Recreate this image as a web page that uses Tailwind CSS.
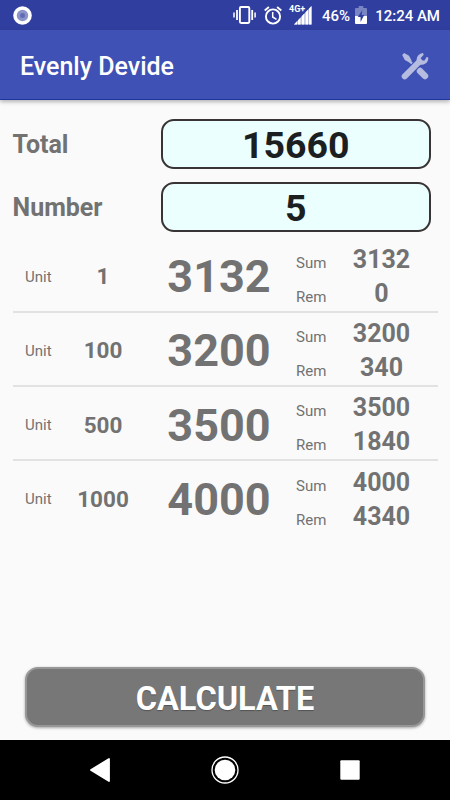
<!DOCTYPE html>
<html lang="en">
<head>
<meta charset="utf-8">
<title>Evenly Devide</title>
<script src="https://cdn.jsdelivr.net/npm/@tailwindcss/browser@4"></script>
</head>
<body class="w-[450px] h-[800px] overflow-hidden bg-[#fafafa] font-[Roboto,sans-serif] text-[#727272] flex flex-col">
<div class="h-[30px] shrink-0 bg-[#303f9f] flex items-center text-white pl-[13px] pr-[10px] font-medium text-[15px]">
  <svg class="w-[19px] h-[19px]" viewBox="0 0 19 19"><circle cx="9.5" cy="9.5" r="9.3" fill="#fff"/><circle cx="9.5" cy="9.5" r="5.7" fill="#8b93c9"/><circle cx="9.5" cy="9.5" r="2.5" fill="#606bb6"/></svg>
  <svg class="w-[23px] h-[18px] ml-[201px]" viewBox="0 0 23 18" fill="none" stroke="#fff" stroke-width="1.9"><rect x="6.9" y="1" width="9.4" height="16" rx="1.2" /><path d="M4 4v10M19.2 4v10" stroke-width="1.8"/><path d="M1 6.5v5M22.1 6.5v5" stroke-width="1.5"/></svg>
  <svg class="w-[18px] h-[19px] ml-[8px]" viewBox="0 0 18 19" fill="none" stroke="#fff"><circle cx="9" cy="10.5" r="7.1" stroke-width="1.9"/><path d="M.7 4.4 4.9 1M17.3 4.4 13.100 1" stroke-width="1.9"/><path d="M8.700 6v5l3.800 2.300" stroke-width="1.5"/></svg>
  <div class="relative w-[23px] h-[20px] ml-[7px]">
    <span class="absolute left-0 top-0 text-[9px] leading-[8px] font-bold">4G+</span>
    <svg class="absolute left-[5px] top-[1px] w-[18px] h-[19px]" viewBox="0 0 18 19" fill="#fff"><path d="M17.500 0v18.500H0z" fill="#fff" fill-opacity=".65"/><path d="M0 18.500 3 15.300v3.200zM4 14.300 6.500 11.700v6.800H4zM7.800 10.300l2.500-2.700v10.900H7.800zM11.600 6.300 14 3.700v14.800h-2.400zM15.100 2.500 17.500 0v18.500h-2.400z"/></svg>
  </div>
  <span class="ml-[10px] w-[28px] whitespace-nowrap leading-[30px] pt-[1px]">46%</span>
  <svg class="w-[12px] h-[18px] ml-[5px]" viewBox="0 0 13 18" preserveAspectRatio="none"><path d="M4 0h5v2h3q1 0 1 1v7H0V3q0-1 1-1h3z" fill="#7984c2"/><path d="M0 10h13v7q0 1-1 1H1q-1 0-1-1z" fill="#fff"/><path d="M8 4 3 11h3v5l4-7H7.200z" fill="#303f9f"/></svg>
  <span class="ml-auto whitespace-nowrap leading-[30px] pt-[1px]">12:24 AM</span>
</div>
<header class="h-[70px] shrink-0 bg-[#3f51b5] border-b border-[#1c36a0] shadow-[0_2px_4px_rgba(0,0,0,0.28)] flex items-center justify-between pl-[20px] pr-[21px] pt-[2px]">
  <h1 class="text-white text-[25px] leading-[30px] font-medium pt-[2px]">Evenly Devide</h1>
  <svg class="w-[28px] h-[28px]" viewBox="0 0 28 28">
    <path d="M7 7.500 15 15.500" fill="none" stroke="#b5bce0" stroke-width="2.400"/>
    <path d="M1.200 3 3.200 1 8 3.800 10.600 8.400 8.400 10.600 3.800 8z" fill="#b5bce0"/>
    <path d="M19 19 24 24" stroke="#b5bce0" stroke-width="6.400" stroke-linecap="round"/>
    <path d="M5 23 18 10" stroke="#3f51b5" stroke-width="8"/>
    <path d="M3.700 24.300 18.500 9.500" stroke="#b5bce0" stroke-width="6" stroke-linecap="round"/>
    <path d="M22 .9Q17.500 1.400 16 5.500 15.300 7.500 16 9.500L18.500 12.500Q21.500 13.400 24.500 11.500 27.500 9.500 27.300 5.500L25.600 5 23.500 8.500 20.800 8.400 19.600 6.200 22.700 2.800z" fill="#b5bce0"/>
  </svg>
</header>
<main class="flex-1 flex flex-col px-[12.5px] pt-[19px]">
  <div class="flex items-center h-[50px] mb-[13px]">
    <span class="w-[148px] text-[25px] leading-[30px] font-bold pt-[2px]">Total</span>
    <div class="w-[270.500px] h-[50px] rounded-[13px] border-2 border-[#383435] bg-[#ebffff] text-[#1c1f1f] text-[37.500px] leading-[50px] font-bold flex items-center justify-center pt-[2px]">15660</div>
  </div>
  <div class="flex items-center h-[50px]">
    <span class="w-[148px] text-[25px] leading-[30px] font-bold pt-[2px]">Number</span>
    <div class="w-[270.500px] h-[50px] rounded-[13px] border-2 border-[#383435] bg-[#ebffff] text-[#1c1f1f] text-[37.500px] leading-[50px] font-bold flex items-center justify-center pt-[2px]">5</div>
  </div>
  <div class="mt-[7px]">
    <div class="h-[74.170px] border-b-[2px] border-[#e2e2e2] flex items-center pl-[12.500px] pt-[4px]">
      <span class="w-[35px] text-[15px]">Unit</span>
      <span class="w-[86px] text-center text-[22.500px] font-bold">1</span>
      <span class="w-[146px] text-center text-[45px] font-bold">3132</span>
      <div class="ml-[4px] w-[136px]"><div class="h-[34px] flex items-baseline leading-[34px]"><span class="w-[35px] text-[15px]">Sum</span><span class="w-[101px] text-center text-[25px] font-bold">3132</span></div><div class="h-[34px] flex items-baseline leading-[34px]"><span class="w-[35px] text-[15px]">Rem</span><span class="w-[101px] text-center text-[25px] font-bold">0</span></div></div>
    </div>
    <div class="h-[74.170px] border-b-[2px] border-[#e2e2e2] flex items-center pl-[12.500px] pt-[4px]">
      <span class="w-[35px] text-[15px]">Unit</span>
      <span class="w-[86px] text-center text-[22.500px] font-bold">100</span>
      <span class="w-[146px] text-center text-[45px] font-bold">3200</span>
      <div class="ml-[4px] w-[136px]"><div class="h-[34px] flex items-baseline leading-[34px]"><span class="w-[35px] text-[15px]">Sum</span><span class="w-[101px] text-center text-[25px] font-bold">3200</span></div><div class="h-[34px] flex items-baseline leading-[34px]"><span class="w-[35px] text-[15px]">Rem</span><span class="w-[101px] text-center text-[25px] font-bold">340</span></div></div>
    </div>
    <div class="h-[74.170px] border-b-[2px] border-[#e2e2e2] flex items-center pl-[12.500px] pt-[4px]">
      <span class="w-[35px] text-[15px]">Unit</span>
      <span class="w-[86px] text-center text-[22.500px] font-bold">500</span>
      <span class="w-[146px] text-center text-[45px] font-bold">3500</span>
      <div class="ml-[4px] w-[136px]"><div class="h-[34px] flex items-baseline leading-[34px]"><span class="w-[35px] text-[15px]">Sum</span><span class="w-[101px] text-center text-[25px] font-bold">3500</span></div><div class="h-[34px] flex items-baseline leading-[34px]"><span class="w-[35px] text-[15px]">Rem</span><span class="w-[101px] text-center text-[25px] font-bold">1840</span></div></div>
    </div>
    <div class="h-[74.170px] border-b-[2px] border-transparent flex items-center pl-[12.500px] pt-[4px]">
      <span class="w-[35px] text-[15px]">Unit</span>
      <span class="w-[86px] text-center text-[22.500px] font-bold">1000</span>
      <span class="w-[146px] text-center text-[45px] font-bold">4000</span>
      <div class="ml-[4px] w-[136px]"><div class="h-[34px] flex items-baseline leading-[34px]"><span class="w-[35px] text-[15px]">Sum</span><span class="w-[101px] text-center text-[25px] font-bold">4000</span></div><div class="h-[34px] flex items-baseline leading-[34px]"><span class="w-[35px] text-[15px]">Rem</span><span class="w-[101px] text-center text-[25px] font-bold">4340</span></div></div>
    </div>
  </div>
  <button class="mt-auto mb-[13px] mx-[12.500px] h-[60px] shrink-0 rounded-[13px] border-[2.500px] border-[#979797] bg-[#777777] shadow-[0_1px_3px_rgba(0,0,0,0.35)] text-white text-[32.500px] leading-[56px] font-bold flex items-center justify-center pt-[4px] [text-shadow:0_1px_1px_rgba(0,0,0,0.3)]">CALCULATE</button>
</main>
<nav class="h-[60px] shrink-0 bg-black flex items-center justify-between pl-[90px] pr-[90px]">
  <svg class="w-[20px] h-[24px]" viewBox="0 0 20 24"><path d="M19 1v22L1 12z" fill="#fff" stroke="#fff" stroke-width="1.800" stroke-linejoin="round"/></svg>
  <svg class="w-[28px] h-[28px]" viewBox="0 0 28 28"><circle cx="14" cy="14" r="13" fill="none" stroke="#fff" stroke-width="1.300"/><circle cx="14" cy="14" r="10.300" fill="#fff"/></svg>
  <svg class="w-[20px] h-[20px]" viewBox="0 0 20 20"><rect x=".3" y=".3" width="19.400" height="19.400" rx="1" fill="#fff"/></svg>
</nav>
</body>
</html>
